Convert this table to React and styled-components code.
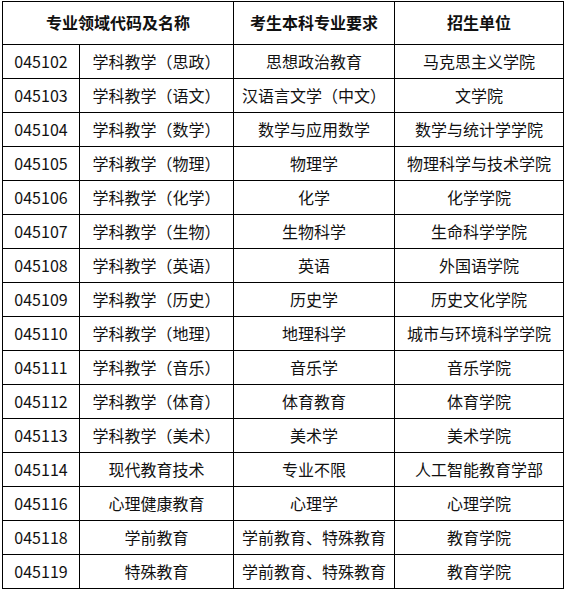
import React from 'react';
import styled, { createGlobalStyle } from 'styled-components';

const GlobalStyle = createGlobalStyle`
  html, body {
    margin: 0;
    padding: 0;
    background: #fff;
  }
  body {
    font-family: "Noto Sans CJK SC", "Noto Sans", sans-serif;
    color: #111;
  }
`;

const Page = styled.div`
  padding: 1px 0 0 2px;
`;

const Grid = styled.div`
  display: grid;
  grid-template-columns: 77px 154px 161px 169px;
  grid-auto-rows: 34px;
  grid-template-rows: 43px;
  width: max-content;
  border-top: 1px solid #000;
  border-left: 1px solid #000;
`;

const Cell = styled.div`
  display: flex;
  align-items: center;
  justify-content: center;
  box-sizing: border-box;
  border-right: 1px solid #000;
  border-bottom: 1px solid #000;
  font-size: 16px;
  line-height: 1;
  white-space: nowrap;
  grid-column: ${(p) => (p.$span ? `span ${p.$span}` : 'auto')};
  font-weight: ${(p) => (p.$head ? 700 : 400)};
  padding-bottom: 2px;
`;

const rows = [
  ['045102', '学科教学（思政）', '思想政治教育', '马克思主义学院'],
  ['045103', '学科教学（语文）', '汉语言文学（中文）', '文学院'],
  ['045104', '学科教学（数学）', '数学与应用数学', '数学与统计学学院'],
  ['045105', '学科教学（物理）', '物理学', '物理科学与技术学院'],
  ['045106', '学科教学（化学）', '化学', '化学学院'],
  ['045107', '学科教学（生物）', '生物科学', '生命科学学院'],
  ['045108', '学科教学（英语）', '英语', '外国语学院'],
  ['045109', '学科教学（历史）', '历史学', '历史文化学院'],
  ['045110', '学科教学（地理）', '地理科学', '城市与环境科学学院'],
  ['045111', '学科教学（音乐）', '音乐学', '音乐学院'],
  ['045112', '学科教学（体育）', '体育教育', '体育学院'],
  ['045113', '学科教学（美术）', '美术学', '美术学院'],
  ['045114', '现代教育技术', '专业不限', '人工智能教育学部'],
  ['045116', '心理健康教育', '心理学', '心理学院'],
  ['045118', '学前教育', '学前教育、特殊教育', '教育学院'],
  ['045119', '特殊教育', '学前教育、特殊教育', '教育学院'],
];

export default function App() {
  return (
    <Page>
      <GlobalStyle />
      <Grid>
        <Cell $head $span={2}>专业领域代码及名称</Cell>
        <Cell $head>考生本科专业要求</Cell>
        <Cell $head>招生单位</Cell>
        {rows.map((row) =>
          row.map((text, i) => <Cell key={row[0] + i}>{text}</Cell>)
        )}
      </Grid>
    </Page>
  );
}
